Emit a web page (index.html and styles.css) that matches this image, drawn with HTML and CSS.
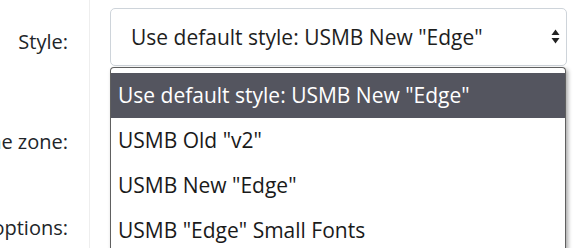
FILE: index.html
```html
<!DOCTYPE html>
<html lang="en">
<head>
    <meta charset="UTF-8">
    <title>Preferences</title>
    <link rel="stylesheet" href="styles.css">
</head>
<body>

    <!-- Preferences form -->
    <div class="form">
        <div class="label row-style"><span>Style:</span></div>
        <div class="field row-style">
            <div class="select">
                <span>Use default style: USMB New "Edge"</span>
                <svg class="arrows" width="9" height="16" viewBox="0 0 9 16">
                    <path d="M4.5 0.5 L8.5 6 L0.5 6 Z" fill="#222"/>
                    <path d="M0.5 9 L8.5 9 L4.5 14.5 Z" fill="#222"/>
                </svg>
            </div>

            <!-- Open list of the select -->
            <ul class="dropdown">
                <li class="selected">Use default style: USMB New "Edge"</li>
                <li>USMB Old "v2"</li>
                <li>USMB New "Edge"</li>
                <li>USMB "Edge" Small Fonts</li>
            </ul>
        </div>

        <div class="label row-zone"><span>Time zone:</span></div>
        <div class="field row-zone"></div>

        <div class="label row-options"><span>Display options:</span></div>
        <div class="field row-options"></div>
    </div>

</body>
</html>
```

FILE: styles.css
```css
body {
    margin: 0;
    font-family: 'Open Sans', 'Noto Sans', sans-serif;
    color: #212529;
    background-color: #fff;
    overflow: hidden;
}

/* Two column form: labels on the left, fields on the right */
.form {
    display: grid;
    grid-template-columns: 90px 1fr;
    grid-template-rows: 80px 122px 46px;
    height: 248px;
}

.label {
    display: flex;
    justify-content: flex-end;
    align-items: center;
    padding-right: 21px;
    border-right: 1px solid #eeeeee;
    font-size: 20px;
    white-space: nowrap;
}

.label.row-style {
    padding-top: 2px;
}

.label.row-options {
    align-items: flex-start;
    padding-top: 12px;
}

.field {
    position: relative;
    padding: 0 10px 0 20px;
}

.field.row-style {
    padding-top: 8px;
}

/* Closed select box */
.select {
    display: flex;
    align-items: center;
    justify-content: space-between;
    height: 56px;
    padding: 0 6px 0 20px;
    border: 1px solid #ced4da;
    border-radius: 5px;
    font-size: 21px;
    color: #1e1e1e;
}

.arrows {
    display: block;
}

/* Open list, lies over the rows below */
.dropdown {
    position: absolute;
    top: 67px;
    left: 20px;
    width: 454px;
    height: 176px;
    margin: 0;
    padding: 5px 0 0;
    list-style: none;
    background-color: #fff;
    border: 1px solid #606060;
    border-bottom: none;
    border-radius: 4px 4px 0 0;
    box-shadow: 2px 2px 4px rgba(0, 0, 0, 0.35);
    overflow: hidden;
}

.dropdown li {
    height: 45px;
    line-height: 45px;
    padding-left: 7px;
    font-size: 21px;
    color: #1a1a1a;
    white-space: nowrap;
}

.dropdown li.selected {
    background-color: #54555f;
    color: #fff;
}
```
